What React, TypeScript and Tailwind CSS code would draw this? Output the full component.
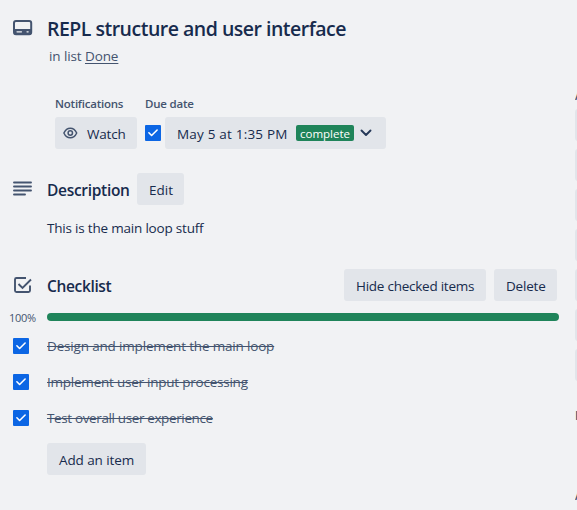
import type { ReactNode } from "react";

function CardIcon() {
  return (
    <svg width="20" height="16" viewBox="0 0 20 16" className="shrink-0" fill="none">
      <rect x="1" y="1" width="17.2" height="13.2" rx="2" stroke="#44546f" strokeWidth="2" />
      <path d="M1 9h17.200v4a2 2 0 0 1-2 2H3a2 2 0 0 1-2-2z" fill="#44546f" />
      <path d="M4 11.800h4.500M14 11.800h1.200" stroke="#f1f2f4" strokeWidth="1.200" strokeLinecap="round" />
    </svg>
  );
}

function TextIcon() {
  return (
    <svg width="20" height="16" viewBox="0 0 20 16" className="shrink-0" fill="none">
      <path d="M1 1.500h17M1 5.500h17M1 9.500h17M1 13.500h11" stroke="#44546f" strokeWidth="1.900" strokeLinecap="round" />
    </svg>
  );
}

function ChecklistIcon() {
  return (
    <svg width="20" height="18" viewBox="0 0 20 18" className="shrink-0" fill="none" stroke="#44546f" strokeWidth="1.900">
      <path d="M13 2H3.500A1.500 1.500 0 0 0 2 3.500v11A1.500 1.500 0 0 0 3.500 16h12a1.500 1.500 0 0 0 1.500-1.500V9.500" />
      <path d="M5.500 8l4 4L18 3.500" />
    </svg>
  );
}

function EyeIcon() {
  return (
    <svg width="15" height="12" viewBox="0 0 15 12" className="shrink-0" fill="none" stroke="#44546f">
      <path d="M.9 6C2.400 2.700 4.600 1.200 7.300 1.200S12.200 2.700 13.700 6C12.200 9.300 10 10.800 7.300 10.800S2.400 9.300.9 6Z" strokeWidth="1.500" />
      <circle cx="7.300" cy="6" r="2.200" strokeWidth="1.500" />
    </svg>
  );
}

function Checkbox() {
  return (
    <span className="block size-4 shrink-0 rounded-[1px] bg-[#0c66e4]">
      <svg width="16" height="16" viewBox="0 0 16 16" fill="none">
        <path d="M3.900 7.800l2.700 2.700 5.500-5.500" stroke="#fff" strokeWidth="1.600" strokeLinecap="round" strokeLinejoin="round" />
      </svg>
    </span>
  );
}

function Button({ className, children }: { className: string; children: ReactNode }) {
  return (
    <button className={`flex h-8 shrink-0 items-center rounded-[3px] bg-[#e2e5ea] pl-3 text-left whitespace-nowrap ${className}`}>
      {children}
    </button>
  );
}

const items = [
  { text: "Design and implement the main loop", tracking: "tracking-[-0.170px]" },
  { text: "Implement user input processing", tracking: "tracking-[-0.230px]" },
  { text: "Test overall user experience", tracking: "tracking-[-0.370px]" },
];

export default function App() {
  return (
    <div className="flex h-[510px] w-[577px] overflow-hidden bg-[#f1f2f4] font-['Open_Sans','Noto_Sans',sans-serif] text-[13.500px] leading-5 text-[#172b4d]">
      <main className="w-[575px] shrink-0 pl-[13px] whitespace-nowrap">
        <header className="flex pt-[17px]">
          <div className="w-[34px] pt-[3px]"><CardIcon /></div>
          <div>
            <h1 className="text-[19.500px] leading-6 font-semibold tracking-[-0.500px]">REPL structure and user interface</h1>
            <p className="mt-[5px] ml-[2px] tracking-[-0.100px] text-[#44546f]">in list <span className="underline underline-offset-2">Done</span></p>
          </div>
        </header>

        <section className="mt-7 ml-[42px] flex text-[#172b4d]">
          <div className="w-[90px]">
            <h3 className="text-[11.500px] font-semibold tracking-[-0.230px] text-[#44546f]">Notifications</h3>
            <div className="mt-[3px]">
              <Button className="w-[82px] gap-[9px] !pl-2"><EyeIcon /><span className="pt-px tracking-[-0.200px]">Watch</span></Button>
            </div>
          </div>
          <div>
            <h3 className="text-[11.500px] font-semibold tracking-[-0.200px] text-[#44546f]">Due date</h3>
            <div className="mt-[3px] flex items-center gap-1">
              <Checkbox />
              <Button className="w-[221px]">
                <span className="w-[119px] pt-px tracking-[0.200px]">May 5 at 1:35 PM</span>
                <span className="flex h-4 w-[58px] items-center justify-center rounded-[2px] bg-[#1f845a] pt-px text-[11.500px] leading-4 text-white">complete</span>
                <svg className="ml-[6px]" width="12" height="8" viewBox="0 0 12 8" fill="none"><path d="M1.500 1.500L6 6l4.500-4.500" stroke="#253858" strokeWidth="1.900" strokeLinecap="round" strokeLinejoin="round" /></svg>
              </Button>
            </div>
          </div>
        </section>

        <section className="mt-6">
          <div className="flex h-8 items-center">
            <div className="w-[34px]"><TextIcon /></div>
            <h2 className="w-[90px] pt-[2px] text-[15.500px] font-semibold tracking-[-0.300px]">Description</h2>
            <Button className="w-[47px]"><span className="pt-px">Edit</span></Button>
          </div>
          <p className="mt-[13px] ml-[34px] tracking-[-0.200px]">This is the main loop stuff</p>
        </section>

        <section className="mt-[31px]">
          <div className="flex h-8 items-center">
            <div className="w-[34px]"><ChecklistIcon /></div>
            <h2 className="w-[297px] pt-[2px] text-[15.500px] font-semibold tracking-[-0.350px]">Checklist</h2>
            <Button className="w-[142px]"><span className="pt-px tracking-[-0.250px]">Hide checked items</span></Button>
            <Button className="ml-2 w-[63px]"><span className="pt-px tracking-[-0.200px]">Delete</span></Button>
          </div>
          <div className="mt-[11px] flex h-[10px] items-center">
            <span className="-ml-1 w-[38px] pt-px text-[11px] leading-[10px] tracking-[-0.300px] text-[#44546f]">100%</span>
            <div className="h-2 w-[512px] rounded-full bg-[#1f845a]" />
          </div>
          <ul className="mt-[6px]">
            {items.map(({ text, tracking }) => (
              <li key={text} className="flex h-9 items-center">
                <div className="w-[34px]"><Checkbox /></div>
                <span className={`text-[#44546f] line-through ${tracking}`}>{text}</span>
              </li>
            ))}
          </ul>
          <div className="mt-[7px] ml-[34px]"><Button className="w-[99px]"><span className="pt-px tracking-[-0.100px]">Add an item</span></Button></div>
        </section>
      </main>
      <aside className="w-[2px] shrink-0 overflow-hidden pt-[86px] text-[12px] font-semibold text-[#44546f]">
        <h3>A</h3>
        <div className="mt-[3px] flex flex-col gap-2">
          {[0, 1, 2, 3, 4, 5, 6].map((n) => <div key={n} className="h-8 w-[168px] rounded-[3px] bg-[#e2e5ea]" />)}
        </div>
        <h3 className="mt-[25px]">P</h3>
        <h3 className="mt-[60px]">A</h3>
      </aside>
    </div>
  );
}
